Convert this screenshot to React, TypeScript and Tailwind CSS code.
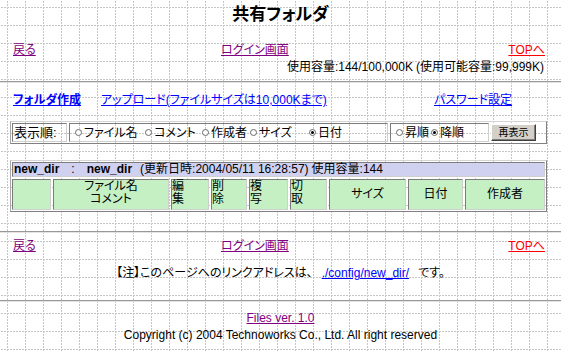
import React from "react";

const cellBorder =
  "border border-t-[#7c7c7c] border-l-[#7c7c7c] border-r-[#cfcfcf] border-b-[#cfcfcf]";
const outerBorder =
  "border border-t-[#d4d4d4] border-l-[#a8a8a8] border-r-[#808080] border-b-[#808080]";

function Radio({ checked }: { checked?: boolean }) {
  return (
    <span className="inline-flex h-[7px] w-[7px] shrink-0 items-center justify-center rounded-full border border-[#6a6a6a] bg-white">
      {checked && <span className="h-[3px] w-[3px] rounded-full bg-black" />}
    </span>
  );
}

function Opt({ label, checked, w }: { label: string; checked?: boolean; w: string }) {
  return (
    <span className={`flex items-center gap-[2px] ${w}`}>
      <Radio checked={checked} />
      <span>{label}</span>
    </span>
  );
}

function NavRow({ top }: { top: string }) {
  return (
    <div className={`grid grid-cols-[208px_1fr_auto] pl-[13px] pr-[16px] leading-[14px] ${top}`}>
      <a href="#" className="text-[#800080] underline">戻る</a>
      <a href="#" className="text-[#800080] underline">ログイン画面</a>
      <a href="#" className="text-[#ff0000] underline">TOPへ</a>
    </div>
  );
}

function Rule({ top }: { top: string }) {
  return <div className={`h-[2px] w-full border-t border-t-[#999] border-b border-b-[#e4e4e4] ${top}`} />;
}

export default function App() {
  return (
    <div className="min-h-screen w-full bg-white font-['Liberation_Sans','Noto_Sans_CJK_JP',sans-serif] text-[12px] text-black [font-feature-settings:'palt'] [background-image:conic-gradient(at_1px_2px,transparent_270deg,#c6c6c6_270deg),conic-gradient(at_2px_1px,transparent_270deg,#c6c6c6_270deg)] [background-size:18px_3px,3px_18px] [background-position:7px_7px,7px_7px]">
      <h1 className="pt-[5px] text-center text-[17px] font-bold leading-[20px]">共有フォルダ</h1>

      <NavRow top="mt-[18px]" />
      <div className="mt-[3px] pr-[17px] text-right leading-[14px]">
        使用容量:144/100,000K<span className="ml-[3px]">(</span>使用可能容量:99,999K)
      </div>

      <Rule top="mt-[7px]" />

      <div className="mt-[10px] grid grid-cols-[88px_333px_1fr] pl-[13px] leading-[14px]">
        <a href="#" className="font-bold text-[#0000ff] underline">フォルダ作成</a>
        <a href="#" className="text-[#0000ff] underline">アップロード(ファイルサイズは10,000Kまで)</a>
        <a href="#" className="text-[#0000ff] underline">パスワード設定</a>
      </div>

      {/* sort options */}
      <div className={`ml-[10px] mt-[14px] flex h-[23px] w-[537px] items-stretch p-[1px] ${outerBorder}`}>
        <div className={`flex w-[55px] items-center px-[1px] text-[13px] ${cellBorder}`}>表示順:</div>
        <div className={`ml-[2px] flex w-[319px] items-center pl-[5px] ${cellBorder}`}>
          <Opt label="ファイル名" w="w-[70px]" />
          <Opt label="コメント" w="w-[57px]" />
          <Opt label="作成者" w="w-[48px]" />
          <Opt label="サイズ" w="w-[59px]" />
          <Opt label="日付" checked w="w-[50px]" />
        </div>
        <div className={`ml-[2px] flex w-[99px] items-center pl-[5px] ${cellBorder}`}>
          <Opt label="昇順" w="w-[35px]" />
          <Opt label="降順" checked w="w-[40px]" />
        </div>
        <div className="ml-[2px] flex items-center">
          <button className="h-[17px] w-[45px] border border-t-white border-l-white border-r-[#404040] border-b-[#404040] bg-[#d4d0c8] text-[10px] leading-[13px] shadow-[inset_-1px_-1px_0_#808080]">
            再表示
          </button>
        </div>
      </div>

      {/* file list */}
      <div className={`ml-[10px] mt-[16px] flex w-[537px] flex-col gap-[2px] p-[1px] ${outerBorder}`}>
        <div className={`flex h-[15px] items-center bg-[#d0d0f0] px-[1px] leading-[13px] ${cellBorder}`}>
          <b>new_dir</b>
          <span className="mx-[12px]">:</span>
          <b>new_dir</b>
          <span className="ml-[8px]">(</span>
          <span>更新日時:2004/05/11 16:28:57)</span>
          <span className="ml-[3px]">使用容量:144</span>
        </div>
        <div className="grid h-[31px] grid-cols-[39px_116px_38px_36px_39px_37px_77px_55px_80px] gap-[2px] leading-[13px]">
          <div className={`bg-[#c4f0c4] ${cellBorder}`} />
          <div className={`bg-[#c4f0c4] text-center ${cellBorder}`}>
            ファイル名<br />コメント
          </div>
          <div className={`bg-[#c4f0c4] ${cellBorder}`}>編<br />集</div>
          <div className={`bg-[#c4f0c4] ${cellBorder}`}>削<br />除</div>
          <div className={`bg-[#c4f0c4] ${cellBorder}`}>複<br />写</div>
          <div className={`bg-[#c4f0c4] ${cellBorder}`}>切<br />取</div>
          <div className={`flex items-center justify-center bg-[#c4f0c4] ${cellBorder}`}>サイズ</div>
          <div className={`flex items-center justify-center bg-[#c4f0c4] ${cellBorder}`}>日付</div>
          <div className={`flex items-center justify-center bg-[#c4f0c4] ${cellBorder}`}>作成者</div>
        </div>
      </div>

      <Rule top="mt-[19px]" />

      <NavRow top="mt-[6px]" />

      <div className="mt-[13px] text-center leading-[14px]">
        【注】このページへのリンクアドレスは、
        <a href="#" className="mx-[9px] text-[#0000ff] underline">./config/new_dir/</a>
        です。
      </div>

      <Rule top="mt-[20px]" />

      <div className="mt-[9px] text-center leading-[14px]">
        <a href="#" className="text-[#800080] underline">Files ver. 1.0</a>
      </div>
      <div className="mt-[3px] text-center leading-[14px]">
        Copyright (c) 2004 Technoworks Co., Ltd. All right reserved
      </div>
    </div>
  );
}
